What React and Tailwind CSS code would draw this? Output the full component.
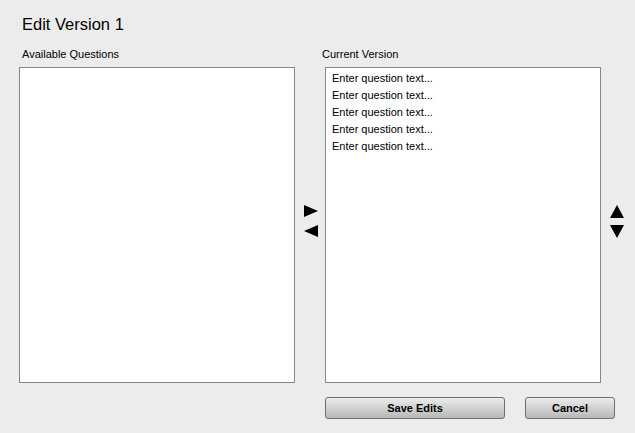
import React from 'react';

const items = Array.from({ length: 5 }, () => 'Enter question text...');

function Tri({ dir }) {
  const pts = {
    right: '0,0 14,6 0,12',
    left: '14,0 0,6 14,12',
    up: '7,0 14,13 0,13',
    down: '0,0 14,0 7,13',
  }[dir];
  const vertical = dir === 'up' || dir === 'down';
  return (
    <svg width="14" height={vertical ? 13 : 12} viewBox={`0 0 14 ${vertical ? 13 : 12}`}>
      <polygon points={pts} fill="#000" />
    </svg>
  );
}

function Btn({ children, w }) {
  return (
    <button
      className={`${w} h-[22px] rounded-[3px] border border-[#707070] bg-gradient-to-b from-[#ececec] to-[#b8b8b8] text-[11px] font-bold text-black`}
    >
      {children}
    </button>
  );
}

export default function App() {
  return (
    <div className="w-[635px] h-[433px] bg-[#ececec] text-black font-['Liberation_Sans','DejaVu_Sans',sans-serif] relative overflow-hidden">
      <div className="pl-[22px] pt-[13px] text-[16.5px] leading-[22px]">Edit Version 1</div>

      <div className="flex pt-[13px]">
        {/* Available */}
        <div className="pl-[19px] w-[295px]">
          <div className="pl-[3px] text-[11px] leading-[13px] h-[19px]">Available Questions</div>
          <div className="w-[276px] h-[316px] bg-white border border-[#828790]" />
        </div>

        {/* move arrows */}
        <div className="w-[30px] flex flex-col items-center pt-[157px] pl-[1px] gap-[8px]">
          <Tri dir="right" />
          <Tri dir="left" />
        </div>

        {/* Current */}
        <div className="w-[276px]">
          <div className="-ml-[3px] text-[11px] leading-[13px] h-[19px]">Current Version</div>
          <div className="w-[276px] h-[316px] bg-white border border-[#828790] pt-[2px] pl-[6px]">
            {items.map((t, i) => (
              <div key={i} className="text-[11px] leading-[17px]">{t}</div>
            ))}
          </div>
        </div>

        {/* order arrows */}
        <div className="flex flex-col items-center pl-[9px] pt-[157px] gap-[7px]">
          <Tri dir="up" />
          <Tri dir="down" />
        </div>
      </div>

      <div className="flex pl-[325px] pt-[14px] gap-[20px]">
        <Btn w="w-[180px]">Save Edits</Btn>
        <Btn w="w-[90px]">Cancel</Btn>
      </div>
    </div>
  );
}
